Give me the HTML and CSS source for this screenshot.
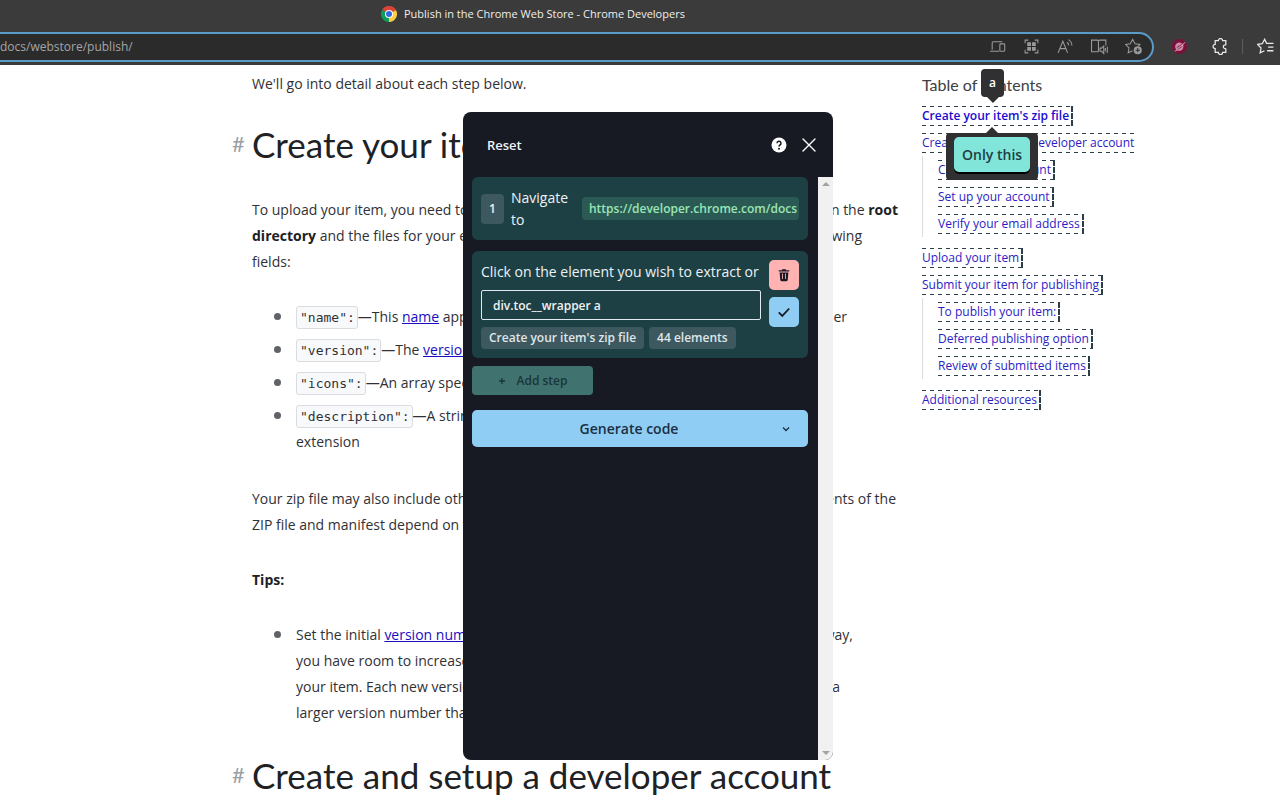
FILE: index.html
```html
<!DOCTYPE html>
<html lang="en">
<head>
<meta charset="utf-8">
<title>Publish in the Chrome Web Store - Chrome Developers</title>
<link rel="stylesheet" href="styles.css">
</head>
<body>
<header class="browser">
  <div class="tab">
    <svg class="favicon" viewBox="0 0 48 48" aria-hidden="true">
      <path fill="#db4437" d="M24 24 L3.2 12 A24 24 0 0 1 44.8 12Z"/>
      <path fill="#0f9d58" d="M24 24 L24 48 A24 24 0 0 1 3.2 12Z"/>
      <path fill="#ffcd40" d="M24 24 L44.8 12 A24 24 0 0 1 24 48Z"/>
      <path fill="#db4437" d="M24 13H45.4L42 10 24 8Z"/>
      <path fill="#0f9d58" d="M14 29L3.2 12 12 18Z"/>
      <circle cx="24" cy="24" r="12" fill="#fff"/>
      <circle cx="24" cy="24" r="9" fill="#3367e0"/>
    </svg>
    <span>Publish in the Chrome Web Store - Chrome Developers</span>
  </div>
  <div class="toolbar">
    <div class="address">
      <input class="url" type="text" value="docs/webstore/publish/" aria-label="Address">
      <div class="address-icons">
        <button type="button" aria-label="Devices"><svg viewBox="0 0 16 16"><path d="M3 11V4.500a1 1 0 0 1 1-1h8.500M1 12.500h8.500M11 5.500h3a.8.8 0 0 1 .8.8v5.400a.8.8 0 0 1-.8.8h-3a.8.8 0 0 1-.8-.8V6.300a.8.8 0 0 1 .8-.8z"/></svg></button>
        <button type="button" aria-label="QR code"><svg viewBox="0 0 16 16"><path d="M2 5V2h3M11 2h3v3M14 11v3h-3M5 14H2v-3"/><path class="solid" d="M4 4h3.500v3.500H4zM8.500 4H12v3.500H8.500zM4 8.500h3.500V12H4zM8.500 8.500H12V12H8.500z"/></svg></button>
        <button type="button" aria-label="Read aloud"><svg viewBox="0 0 16 16"><path d="M1 14L5.500 3 10 14M2.600 10h5.800M9.500 4c1 .8 1.500 1.700 1.500 3M10.700 1.500c2.200 1.300 3.300 3.200 3.300 5.500"/></svg></button>
        <button type="button" aria-label="Immersive reader"><svg viewBox="0 0 16 16"><path d="M7 13H.5V2H6q1 0 1 1v10M7 3q0-1 1-1h6v5M8.500 9.500v3H10l2 2v-7l-2 2zM13.500 9.500v3M15.300 8v6"/></svg></button>
        <button type="button" aria-label="Add to favorites"><svg viewBox="0 0 16 16"><path d="M7 12l-4 2 .8-4.600L.5 6l4.500-.6L7.200 1.200 9.400 5.400 14 6l-1.500 1.600"/><circle class="solid" cx="12" cy="11.500" r="3.800"/><path class="cut" d="M12 9.500v4M10 11.500h4"/></svg></button>
      </div>
    </div>
    <button class="ext" type="button" aria-label="Scraper extension"><svg viewBox="0 0 16 16"><circle cx="8" cy="8" r="7" fill="#7d0f3c"/><circle cx="7.800" cy="8.200" r="3.900" fill="#c78aa2"/><path d="M3.500 12.500Q9 11 13 4" fill="none" stroke="#e6bccb" stroke-width=".8"/><path d="M5.500 9L10 6.200M6.200 10.800L10.500 8" fill="none" stroke="#7d0f3c" stroke-width=".7"/></svg></button>
    <button class="puzzle" type="button" aria-label="Extensions"><svg viewBox="0 0 16 16"><path d="M3 2.500h3a2 2 0 0 1 4 0h3v3.500q0 .5-.5.500a1.800 1.800 0 0 0 0 3.600q.5 0 .5.500v3h-3a2 2 0 0 1-4 0H3v-3.600a2 2 0 0 1 0-4z"/></svg></button>
    <span class="divider"></span>
    <button class="favs" type="button" aria-label="Favorites"><svg viewBox="0 0 16 16"><path d="M7 12l-4 2 .8-4.600L.5 6l4.500-.6L7.200 1.200 9 5h6.500M10.500 8.500h5M9.500 12h6"/></svg></button>
  </div>
</header>

<div class="page">
  <main class="article">
    <p>We'll go into detail about each step below.</p>
    <h2><a class="anchor" href="#zip">#</a><span id="zip">Create your item's zip file</span></h2>
    <p>
      <span class="line"><span>To upload your item, you need to submit a ZIP file that</span><span>in the <b>root</b></span></span>
      <span class="line end-sm"><span><b>directory</b> and the files for your extension or theme</span><span>following</span></span>
      <span class="line">fields:</span>
    </p>
    <ul>
      <li><span class="line end-lg"><span><code>"name":</code>—This <a href="#name">name</a> appears in the store</span><span>browser</span></span></li>
      <li><code>"version":</code>—The <a href="#version">version number</a></li>
      <li><code>"icons":</code>—An array specifying icons</li>
      <li><code>"description":</code>—A string describing your<br>extension</li>
    </ul>
    <p>
      <span class="line"><span>Your zip file may also include other images</span><span class="tail">contents of the</span></span>
      <span class="line">ZIP file and manifest depend on the item.</span>
    </p>
    <p><b>Tips:</b></p>
    <ul>
      <li>
        <span class="line end-md"><span>Set the initial <a href="#number">version number</a> to a low value</span><span>this way,</span></span>
        <span class="line">you have room to increase the version</span>
        <span class="line end-xl"><span>your item. Each new version that you upload</span><span>has a</span></span>
        <span class="line">larger version number than the last one.</span>
      </li>
    </ul>
    <h2><a class="anchor" href="#account">#</a><span id="account">Create and setup a developer account</span></h2>
  </main>

  <nav class="toc" aria-label="Table of contents">
    <div class="toc-title">Table of contents</div>
    <ul>
      <li><a class="current" href="#zip">Create your item's zip file</a></li>
      <li><a class="open" href="#account">Create and setup a developer account</a>
        <ul>
          <li><a href="#create">Create your account</a></li>
          <li><a href="#setup">Set up your account</a></li>
          <li><a href="#verify">Verify your email address</a></li>
        </ul>
      </li>
      <li><a href="#upload">Upload your item</a></li>
      <li><a href="#submit">Submit your item for publishing</a>
        <ul>
          <li><a href="#publish">To publish your item:</a></li>
          <li><a href="#deferred">Deferred publishing option</a></li>
          <li><a href="#review">Review of submitted items</a></li>
        </ul>
      </li>
      <li><a href="#resources">Additional resources</a></li>
    </ul>
    <div class="tag-tip">a</div>
    <div class="only-tip"><button type="button">Only this</button></div>
  </nav>
</div>

<section class="panel" aria-label="Steps">
  <div class="panel-head">
    <button class="reset" type="button">Reset</button>
    <button class="icon" type="button" aria-label="Help"><svg viewBox="0 0 16 16"><circle cx="8" cy="8" r="7.500" fill="#fff"/><path d="M6 6.300a2 2 0 1 1 3 1.700q-1 .6-1 1.500" fill="none" stroke="#171923" stroke-width="1.500"/><circle cx="8" cy="11.700" r="1" fill="#171923"/></svg></button>
    <button class="icon" type="button" aria-label="Close"><svg viewBox="0 0 16 16"><path d="M2 2l12 12M14 2L2 14" fill="none" stroke="#fff" stroke-width="1.400" stroke-linecap="round"/></svg></button>
  </div>
  <div class="panel-body">
    <div class="steps">
      <div class="step navigate">
        <span class="num">1</span>
        <span class="label">Navigate to</span>
        <span class="link">https://developer.chrome.com/docs</span>
      </div>
      <div class="step select">
        <div class="fields">
          <label for="selector">Click on the element you wish to extract or</label>
          <input id="selector" type="text" value="div.toc__wrapper a">
          <div class="chips"><span>Create your item's zip file</span><span>44 elements</span></div>
        </div>
        <div class="actions">
          <button class="delete" type="button" aria-label="Delete step"><svg viewBox="0 0 16 16"><path fill="#171923" d="M6 1.500h4l.5 1H14V4H2V2.500h3.500zM3 5h10l-.7 8.500q-.1 1.500-1.500 1.500H5.200q-1.400 0-1.500-1.500z"/><path d="M6.300 6.500v6M9.700 6.500v6" stroke="#feb2b2" stroke-width="1"/></svg></button>
          <button class="confirm" type="button" aria-label="Confirm step"><svg viewBox="0 0 16 16"><path d="M2 8.500l4 4L14 4" fill="none" stroke="#171923" stroke-width="2"/></svg></button>
        </div>
      </div>
      <button class="add" type="button"><svg viewBox="0 0 8 8"><path d="M4 1v6M1 4h6" stroke="currentColor" stroke-width="1.300"/></svg>Add step</button>
      <button class="generate" type="button"><span>Generate code</span><svg viewBox="0 0 8 8"><path d="M1 2.500l3 3 3-3" fill="none" stroke="currentColor" stroke-width="1.300"/></svg></button>
    </div>
    <div class="scrollbar"><span class="up"></span><span class="down"></span></div>
  </div>
</section>
</body>
</html>
```

FILE: styles.css
```css
* { box-sizing: border-box; }

body {
  margin: 0;
  height: 100vh;
  overflow: hidden;
  background: #fff;
  color: #303136;
  font-family: "Open Sans", "Noto Sans", sans-serif;
  font-size: 14px;
  line-height: 26px;
}

button, input {
  margin: 0;
  padding: 0;
  border: 0;
  background: none;
  color: inherit;
  font: inherit;
}

svg { display: block; }
ul { margin: 0; padding: 0; list-style: none; }
a { color: #1a0dbf; }

/* Browser chrome */
.browser {
  position: relative;
  z-index: 1;
  display: flex;
  flex-direction: column;
  height: 65px;
  background: #3b3b3b;
  color: #eee;
  font-size: 11px;
}

.tab {
  display: flex;
  align-items: center;
  gap: 7px;
  height: 31px;
  padding: 0 0 3px 381px;
}

.favicon { width: 16px; height: 16px; }

.toolbar { display: flex; align-items: center; height: 31px; }

.address {
  flex: 1;
  display: flex;
  align-items: center;
  height: 30px;
  border: 2px solid #5b9bc8;
  border-left: 0;
  border-radius: 0 15px 15px 0;
  background: #2b2b2b;
}

.url { flex: 1; color: #a5a5a5; font-size: 12px; }

.address-icons { display: flex; gap: 17px; padding-right: 10px; }

.toolbar svg { width: 17px; height: 17px; }
.address-icons svg, .puzzle svg, .favs svg { fill: none; stroke: #9a9a9a; stroke-width: 1; }
.address-icons .solid { fill: #9a9a9a; stroke: none; }
.address-icons .cut { stroke: #2b2b2b; }
.toolbar .puzzle svg, .toolbar .favs svg { stroke: #e8e8e8; stroke-width: 1.2; }
.ext { margin-left: 17px; }
.puzzle { margin-left: 24px; }
.divider { width: 1px; height: 15px; margin: 0 14px 0 13px; background: #5c5c5c; }
.favs { margin-right: 6px; }

/* Document */
.page {
  display: grid;
  grid-template-columns: 646px 1fr;
  column-gap: 24px;
  padding: 6px 0 0 252px;
}

.article p { margin: 0 0 29px; }
.article ul { margin-bottom: 31px; padding-left: 44px; }
.article li { position: relative; margin-bottom: 7px; }
.article li:last-child { margin-bottom: 0; }
.article li::before {
  content: "";
  position: absolute;
  left: -22px;
  top: 9px;
  width: 7px;
  height: 7px;
  border-radius: 50%;
  background: #5f6368;
}

.article h2 {
  display: flex;
  align-items: center;
  gap: 6px;
  margin: -4px 0 31px -20px;
  color: #202124;
  font: 400 35px/44px Lato, sans-serif;
  white-space: nowrap;
}

.anchor { width: 14px; color: #9aa0a6; font-size: 22px; text-decoration: none; }
.line { display: flex; justify-content: space-between; white-space: nowrap; }
.tail { padding-right: 2px; }
.end-sm { padding-right: 36px; }
.end-md { padding-right: 45px; }
.end-lg { padding-right: 51px; }
.end-xl { padding-right: 58px; }
.article b { color: #202124; }

code {
  padding: 3px 2px 3px 3px;
  border: 1px solid #dadce0;
  border-radius: 3px;
  background: #f8f9fa;
  font: 13px "DejaVu Sans Mono", monospace;
}

/* Table of contents */
.toc { position: relative; font-size: 12px; line-height: 27px; white-space: nowrap; }
.toc-title { margin-bottom: 4px; color: #3c4043; font: 16px/27px Lato, sans-serif; }
.toc a {
  padding: 1px 2px 2px 0;
  border-right: 2px dashed #2b3d46;
  background:
    repeating-linear-gradient(90deg, #2b3d46 0 4px, transparent 4px 8px) top / 100% 1px no-repeat,
    repeating-linear-gradient(90deg, #2b3d46 0 4px, transparent 4px 8px) bottom / 100% 1px no-repeat;
  color: #2b1cc4;
  text-decoration: none;
}
.toc .current { color: #1a0dcf; font-weight: 600; }
.toc .open { border-right: 0; }
.toc li ul { margin-bottom: 7px; padding-left: 15px; border-left: 1px solid #dadce0; }

.tag-tip, .only-tip {
  position: absolute;
  border-radius: 4px;
  background: #303033;
  color: #fff;
  font-weight: 600;
}
.tag-tip { left: 59px; top: -2px; width: 23px; line-height: 28px; text-align: center; font-size: 12px; }
.only-tip { left: 24px; top: 62px; padding: 4px 8px 8px; font-size: 14px; }
.tag-tip::after, .only-tip::before {
  content: "";
  position: absolute;
  left: calc(50% - 6px);
  border: 6px solid transparent;
}
.tag-tip::after { top: 100%; border-top-color: #303033; }
.only-tip::before { bottom: 100%; border-bottom-color: #303033; }
.only-tip button {
  display: block;
  height: 35px;
  padding: 0 8px;
  border-radius: 5px;
  background: #81e6d9;
  box-shadow: 0 2px 0 #000;
  color: #1d4044;
}

/* Step panel */
.panel {
  position: absolute;
  z-index: 2;
  left: 463px;
  top: 112px;
  display: flex;
  flex-direction: column;
  width: 370px;
  height: 648px;
  overflow: hidden;
  border-radius: 8px;
  background: #171923;
  color: #eef2f4;
}

.panel-head { display: flex; align-items: center; gap: 14px; height: 65px; padding: 0 16px 0 24px; }
.reset { margin-right: auto; font-size: 13px; font-weight: 600; }
.icon svg { width: 16px; height: 16px; }

.panel-body { flex: 1; display: flex; }
.steps { flex: 1; display: flex; flex-direction: column; padding: 0 10px 0 9px; }
.step { display: flex; border-radius: 6px; background: #1d4044; }

.navigate { align-items: center; height: 63px; padding: 0 9px; margin-bottom: 11px; }
.num {
  width: 23px;
  margin-right: 7px;
  border-radius: 4px;
  background: #3d595f;
  text-align: center;
  font-size: 12px;
  font-weight: 600;
  line-height: 30px;
}
.label { width: 71px; line-height: 22px; }
.link {
  flex: 1;
  overflow: hidden;
  padding-left: 7px;
  border-radius: 4px;
  background: #2b5a55;
  color: #9ae6b4;
  font-size: 12px;
  font-weight: 600;
  line-height: 23px;
  white-space: nowrap;
}

.select { gap: 8px; height: 107px; padding: 9px; margin-bottom: 8px; }
.fields { flex: 1; display: flex; flex-direction: column; min-width: 0; }
.fields label { line-height: 24px; margin-bottom: 6px; white-space: nowrap; }
.fields input {
  width: 100%;
  height: 30px;
  margin-bottom: 7px;
  padding: 0 11px;
  border: 1px solid #e2e8f0;
  border-radius: 2px;
  font-size: 12px;
  font-weight: 600;
}
.chips { display: flex; gap: 5px; font-size: 12px; font-weight: 600; line-height: 22px; white-space: nowrap; }
.chips span { padding: 0 8px; border-radius: 4px; background: #3d595f; color: #dfe6ea; }
.actions { display: flex; flex-direction: column; gap: 7px; }
.actions button { display: grid; place-items: center; width: 30px; height: 30px; border-radius: 5px; }
.actions svg { width: 14px; height: 14px; }
.delete { background: #feb2b2; }
.confirm { background: #90cdf4; }

.add {
  display: flex;
  align-items: center;
  justify-content: center;
  gap: 11px;
  align-self: flex-start;
  width: 121px;
  height: 29px;
  margin-bottom: 15px;
  border-radius: 4px;
  background: #407370;
  color: #1b3538;
  font-size: 12px;
  font-weight: 600;
}
.add svg, .generate svg { width: 8px; height: 8px; }
.generate {
  display: flex;
  align-items: center;
  height: 37px;
  padding: 0 18px 0 4px;
  border-radius: 5px;
  background: #90cdf4;
  color: #1a2f42;
  font-weight: 600;
}
.generate span { flex: 1; }

.scrollbar {
  display: flex;
  flex-direction: column;
  justify-content: space-between;
  align-items: center;
  width: 15px;
  padding: 5px 0;
  background: #f1f1f1;
}
.scrollbar span { border: 4px solid transparent; }
.scrollbar .up { border-top-width: 0; border-bottom-color: #a3a3a3; }
.scrollbar .down { border-bottom-width: 0; border-top-color: #a3a3a3; }
```
